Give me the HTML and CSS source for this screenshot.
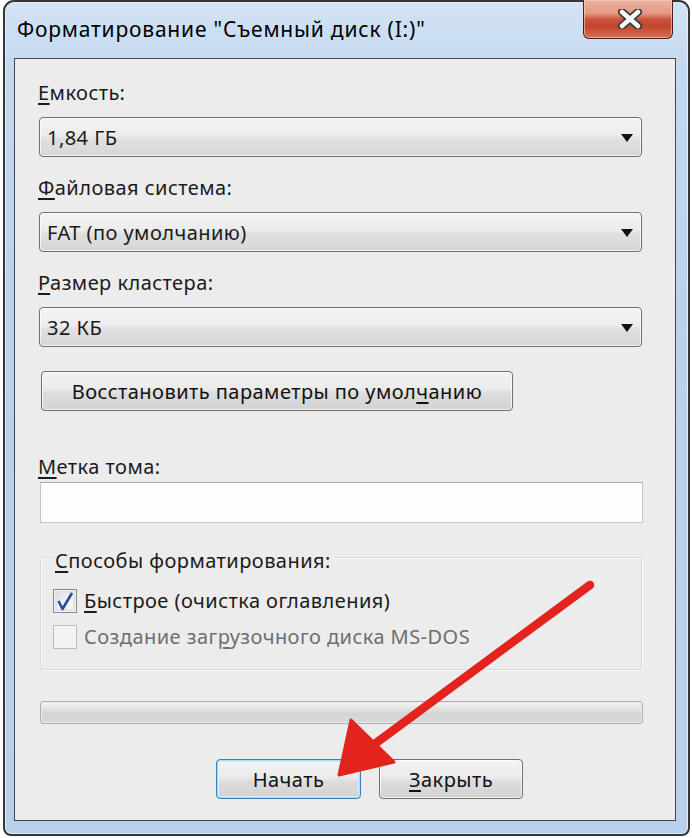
FILE: index.html
```html
<!DOCTYPE html>
<html lang="ru">
<head>
<meta charset="utf-8">
<title>Форматирование</title>
<link rel="stylesheet" href="styles.css">
</head>
<body>
<div class="window">
  <div class="titlebar"><span class="title">Форматирование "Съемный диск (I:)"</span></div>
  <button class="close-btn" aria-label="Закрыть">
    <svg width="26" height="20" viewBox="0 0 26 20">
      <path d="M5 3 L21 17 M21 3 L5 17" stroke="#3b3b3b" stroke-width="8" stroke-linecap="round" fill="none"/>
      <path d="M5 3 L21 17 M21 3 L5 17" stroke="#fafafa" stroke-width="4.5" stroke-linecap="round" fill="none"/>
    </svg>
  </button>
  <div class="panel">
    <div class="field">
      <div class="field-label"><u>Е</u>мкость:</div>
      <div class="combo"><span>1,84 ГБ</span><span class="caret"></span></div>
    </div>
    <div class="field">
      <div class="field-label"><u>Ф</u>айловая система:</div>
      <div class="combo"><span>FAT (по умолчанию)</span><span class="caret"></span></div>
    </div>
    <div class="field">
      <div class="field-label"><u>Р</u>азмер кластера:</div>
      <div class="combo"><span>32 КБ</span><span class="caret"></span></div>
    </div>
    <button class="btn reset-btn">Восстановить параметры по умол<u>ч</u>анию</button>
    <div class="field-label volume-label"><u>М</u>етка тома:</div>
    <div class="textbox"></div>
    <div class="group">
      <div class="group-title"><u>С</u>пособы форматирования:</div>
      <div class="check-row">
        <span class="checkbox">
          <svg width="22" height="22" viewBox="0 0 22 22"><path d="M4.5 11 L8.5 19 L18 3" stroke="#2c4c9c" stroke-width="2.6" fill="none" stroke-linejoin="round"/></svg>
        </span>
        <span class="check-text"><u>Б</u>ыстрое (очистка оглавления)</span>
      </div>
      <div class="check-row disabled">
        <span class="checkbox"></span>
        <span class="check-text">Создание заг<u>р</u>узочного диска MS-DOS</span>
      </div>
    </div>
    <div class="progress"></div>
    <div class="actions">
      <button class="btn start-btn">Начать</button>
      <button class="btn"><u>З</u>акрыть</button>
    </div>
  </div>
</div>
<svg class="arrow" width="692" height="838" viewBox="0 0 692 838">
  <line x1="590" y1="585" x2="372" y2="746" stroke="#e3231d" stroke-width="8.5" stroke-linecap="round"/>
  <polygon points="339,775 351,720 394,762" fill="#e3231d" stroke="#e3231d" stroke-width="3" stroke-linejoin="round"/>
</svg>
</body>
</html>
```
FILE: styles.css
```css
* { box-sizing: border-box; }
html, body { margin: 0; padding: 0; background: #ffffff; }
body {
  width: 692px;
  height: 838px;
  overflow: hidden;
  position: relative;
  font-family: "Noto Sans", "Open Sans", sans-serif;
  color: #1a1a1a;
}
u { text-decoration-thickness: 2px; text-underline-offset: 3px; }

.window {
  position: relative;
  margin-left: 3px;
  width: 687px;
  height: 836px;
  border: 2px solid #363636;
  border-radius: 11px 11px 8px 8px;
  background: linear-gradient(to bottom, #d3e3f4 0%, #c3d9f0 8%, #b9d2ed 40%, #b7d0ec 100%);
  box-shadow: inset 0 0 0 1px #e4eefa;
}
.titlebar {
  height: 56px;
  padding: 15px 0 0 12px;
}
.title {
  font-size: 21px;
  line-height: 24px;
  letter-spacing: 0.8px;
  color: #000;
}
.close-btn {
  position: absolute;
  top: -2px;
  right: 15px;
  width: 90px;
  height: 39px;
  padding: 0;
  border: 1px solid #4b2018;
  border-top: none;
  border-radius: 0 0 6px 6px;
  background: linear-gradient(to bottom, #eab3a2 0%, #e49a84 35%, #c9503a 52%, #c4472f 70%, #d76e57 100%);
  box-shadow: inset 0 0 0 1px rgba(255, 210, 195, 0.6);
  display: flex;
  align-items: center;
  justify-content: center;
}
.close-btn svg { margin-left: 4px; }

.panel {
  margin-left: 9px;
  width: 662px;
  height: 763px;
  border: 1px solid #464646;
  background: #ececec;
  padding: 22px 33px 0 24px;
  font-size: 20px;
  letter-spacing: 0.45px;
}
.field-label {
  line-height: 24px;
  margin-left: -1px;
  color: #1a1a1a;
}
.field + .field { margin-top: 19px; }
.combo {
  margin-top: 12px;
  height: 40px;
  border: 1px solid #6f6f6f;
  border-radius: 4px;
  background: linear-gradient(to bottom, #f4f4f4 0%, #ececec 45%, #e0e0e0 55%, #d6d6d6 100%);
  box-shadow: inset 0 0 0 1px rgba(255, 255, 255, 0.7);
  display: flex;
  align-items: center;
  justify-content: space-between;
  padding: 0 8px 0 7px;
}
.caret {
  width: 0;
  height: 0;
  border-left: 6.5px solid transparent;
  border-right: 6.5px solid transparent;
  border-top: 8px solid #111;
  margin-top: 2px;
}
.btn {
  font-family: inherit;
  font-size: 20px;
  letter-spacing: 0.45px;
  color: #111;
  height: 40px;
  padding: 0;
  border: 1px solid #6f6f6f;
  border-radius: 4px;
  background: linear-gradient(to bottom, #f3f3f3 0%, #ebebeb 45%, #dddddd 55%, #d2d2d2 100%);
  box-shadow: inset 0 0 0 1px rgba(255, 255, 255, 0.75);
}
.reset-btn {
  display: block;
  margin: 24px 0 0 2px;
  width: 472px;
}
.volume-label { margin-top: 43.5px; }
.textbox {
  margin: 3.5px 0 0 1px;
  width: 603px;
  height: 41px;
  border: 1px solid #c5c5c5;
  border-top-color: #a9a9a9;
  background: #fdfdfd;
}
.group {
  margin: 34px 0 0 1px;
  width: 602px;
  border: 1px solid #d3d9df;
  border-radius: 3px;
  box-shadow: 1px 1px 0 #fafafa, inset 1px 1px 0 #fafafa;
  padding: 0 12px 14px 12px;
}
.group-title {
  width: fit-content;
  margin: -9.5px 0 0 -1px;
  padding: 0 3px;
  background: #ececec;
  line-height: 24px;
}
.group-title + .check-row { margin-top: 10.5px; }
.check-row {
  height: 36px;
  display: flex;
  align-items: center;
  gap: 7px;
}
.checkbox {
  width: 24px;
  height: 24px;
  flex: none;
  border: 1px solid #8a8a8a;
  background: linear-gradient(135deg, #dcdcdc 0%, #f6f6f6 70%, #ffffff 100%);
  box-shadow: inset 0 0 0 1px #f2f2f2, inset 0 0 0 3px #e2e2e2;
  display: flex;
  align-items: center;
  justify-content: center;
}
.disabled .checkbox {
  border-color: #bdbdbd;
  background: #f3f3f3;
  box-shadow: none;
}
.disabled .check-text { color: #6e6e6e; }
.check-text { line-height: 24px; }
.progress {
  margin: 31px 0 0 1px;
  width: 603px;
  height: 23px;
  border: 1px solid #b0b0b0;
  border-radius: 3px;
  background: linear-gradient(to bottom, #f4f4f4 0%, #e3e3e3 30%, #d4d4d4 55%, #d9d9d9 100%);
  box-shadow: inset 0 0 0 1px #eaeaea;
}
.actions {
  margin: 35px 0 0 177px;
  display: flex;
  gap: 18px;
}
.actions .btn { width: 144px; }
.actions .start-btn {
  width: 145px;
  border-color: #3c7fb1;
  box-shadow: inset 0 0 0 1px #a9def7, inset 0 0 0 2px #cdeefc;
}
.arrow {
  position: absolute;
  top: 0;
  left: 0;
  pointer-events: none;
}
```
